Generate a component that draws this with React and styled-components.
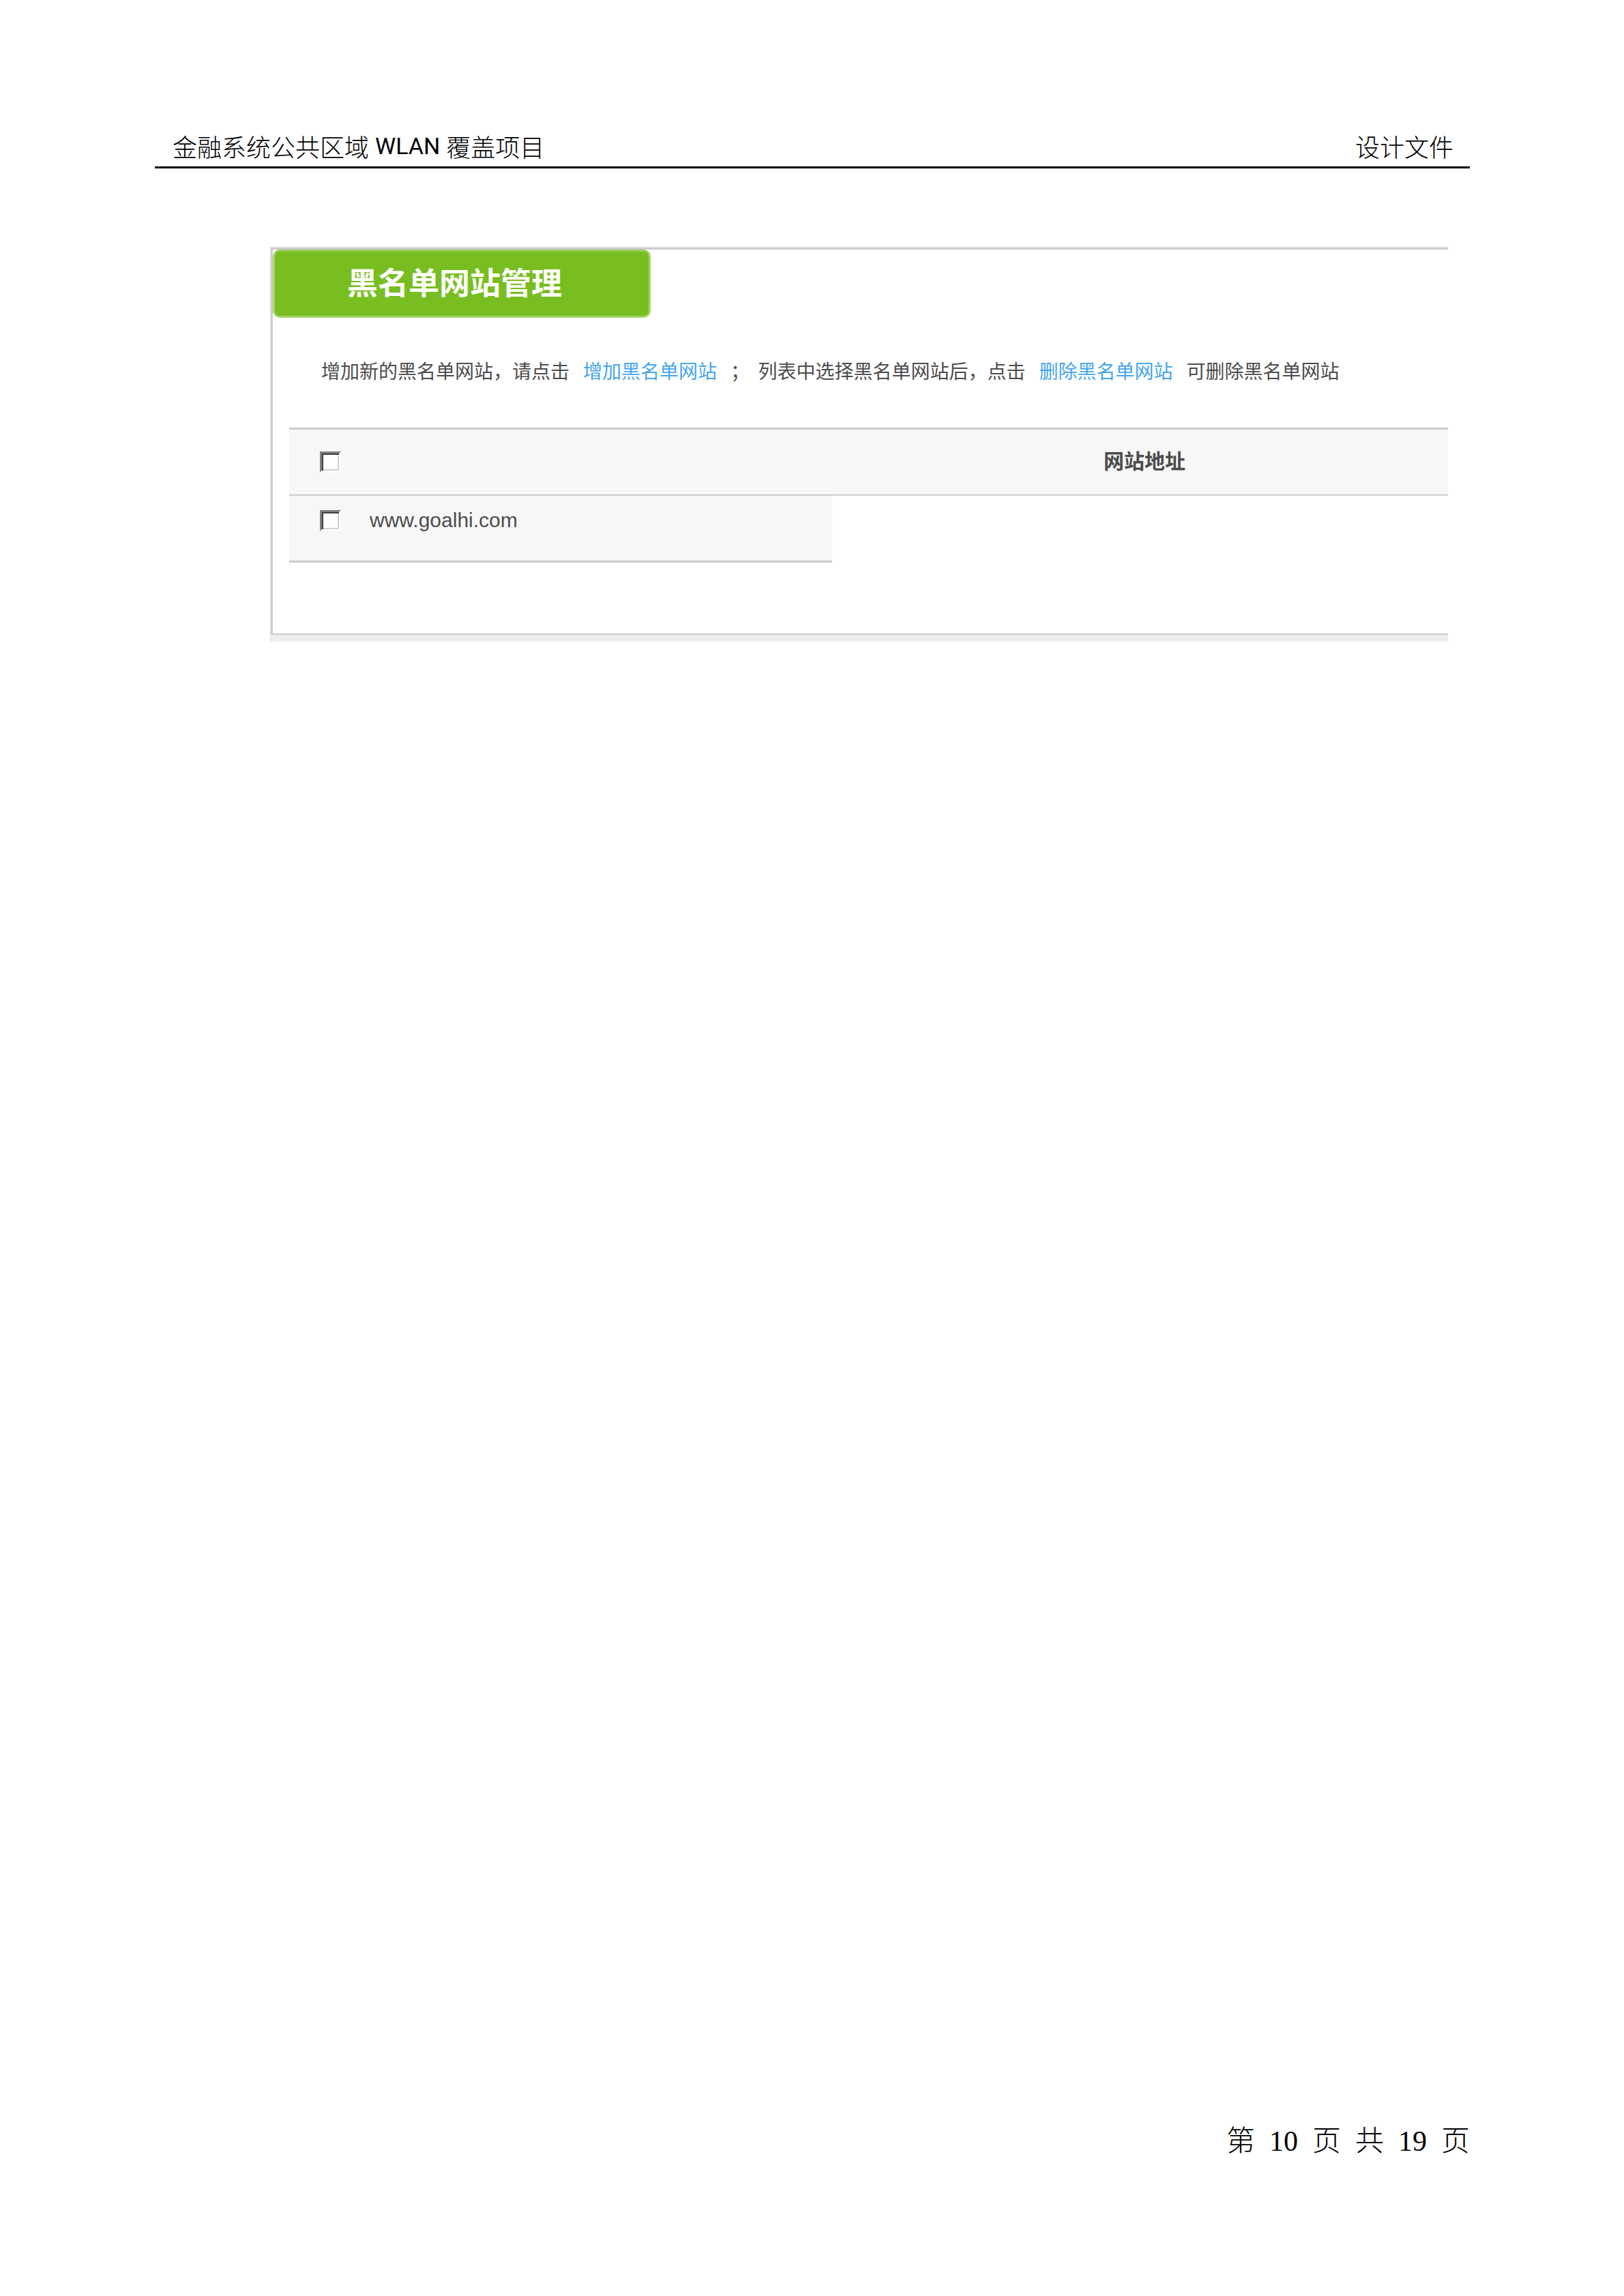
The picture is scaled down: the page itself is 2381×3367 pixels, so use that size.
import React, { useState } from 'react';
import styled, { createGlobalStyle } from 'styled-components';

const COLORS = {
  ink: '#000000',
  text: '#4c4c4c',
  link: '#45a5ef',
  green: '#78be20',
  greenEdge: '#a5d56b',
  line: '#cccccc',
  edge: '#ededed',
  cell: '#f7f7f7',
};

const SANS = `"Liberation Sans", "Noto Sans CJK SC", sans-serif`;
const CJK = `"Noto Sans CJK SC", sans-serif`;

const GlobalStyle = createGlobalStyle`
  * {
    box-sizing: border-box;
  }
  body {
    margin: 0;
    background: #ffffff;
  }
`;

const Page = styled.div`
  display: flex;
  flex-direction: column;
  min-height: 100vh;
  padding: 186px 226px 196px 227px;
  color: ${COLORS.ink};
`;

const PageHeader = styled.header`
  display: flex;
  justify-content: space-between;
  padding: 0 24px 2px 26px;
  border-bottom: 3px solid ${COLORS.ink};
  font-family: ${CJK};
  font-size: 36px;
  font-weight: 300;
  line-height: 56px;
`;

const ProjectName = styled.span`
  display: flex;
  gap: 9px;
`;

const Latin = styled.span`
  font-family: Roboto, "Liberation Sans", sans-serif;
  font-size: 34px;
  font-weight: 400;
`;

const Panel = styled.section`
  margin: 114px 32px 0 168px;
  border: solid ${COLORS.edge};
  border-width: 2px 0 10px 2px;
  font-family: ${SANS};
  color: ${COLORS.text};
`;

const PanelBody = styled.div`
  border: solid ${COLORS.line};
  border-width: 3px 0 2px 3px;
  padding-bottom: 104px;
`;

const PanelTitle = styled.h1`
  width: 554px;
  margin: 0;
  padding: 0 0 6px 106px;
  border: 3px solid ${COLORS.greenEdge};
  border-top-color: #97cb58;
  border-radius: 10px;
  background: ${COLORS.green};
  color: #ffffff;
  font-family: ${CJK};
  font-size: 45px;
  font-weight: 700;
  line-height: 88px;
`;

const Hint = styled.p`
  margin: 0;
  padding: 56px 0 63px 71px;
  font-family: ${CJK};
  font-size: 28px;
  line-height: 42px;
`;

const HintLink = styled.a`
  margin: 0 20px;
  color: ${COLORS.link};
  text-decoration: none;
`;

const TableWrap = styled.div`
  padding-left: 24px;
`;

const SiteTable = styled.table`
  width: 100%;
  table-layout: fixed;
  border-spacing: 0;
  font-size: 30px;
  line-height: 34px;
`;

const SelectHead = styled.th`
  width: 796px;
  height: 100px;
  padding: 0 0 0 45px;
  border: solid ${COLORS.line};
  border-width: 3px 0 2px;
  background: ${COLORS.cell};
  text-align: left;
`;

const AddressHead = styled(SelectHead)`
  width: auto;
  padding: 0 0 8px 13px;
  font-family: ${CJK};
  text-align: center;
`;

const SiteCell = styled.td`
  height: 98px;
  padding: 19px 0 0 45px;
  border-bottom: 3px solid ${COLORS.line};
  background: ${COLORS.cell};
  vertical-align: top;
`;

const SiteLabel = styled.label`
  display: flex;
  align-items: center;
  gap: 42px;
`;

const Checkbox = styled.input`
  appearance: none;
  display: block;
  flex: none;
  width: 31px;
  height: 31px;
  margin: 0;
  border: solid;
  border-width: 3px;
  border-color: #808080 #ffffff #ffffff #808080;
  background: #ffffff;
  box-shadow: inset 2px 2px #404040, inset -2px -2px #d4d0c8;
  &:checked {
    background: #404040;
  }
`;

const PageFooter = styled.footer`
  display: flex;
  justify-content: flex-end;
  gap: 21px;
  margin-top: auto;
  font-family: "Liberation Serif", "Noto Sans CJK SC", serif;
  font-size: 42px;
  font-weight: 300;
  line-height: 62px;
`;

const SITES = ['www.goalhi.com'];

function App() {
  const [selected, setSelected] = useState([]);

  const toggleAll = (e) => setSelected(e.target.checked ? SITES : []);
  const toggle = (site) =>
    setSelected(
      selected.includes(site) ? selected.filter((s) => s !== site) : [...selected, site]
    );

  return (
    <>
      <GlobalStyle />
      <Page lang="zh-CN">
        <PageHeader>
          <ProjectName>
            <span>金融系统公共区域</span>
            <Latin>WLAN</Latin>
            <span>覆盖项目</span>
          </ProjectName>
          <span>设计文件</span>
        </PageHeader>
        <Panel>
          <PanelBody>
            <PanelTitle>黑名单网站管理</PanelTitle>
            <Hint>
              增加新的黑名单网站，请点击
              <HintLink href="#add">增加黑名单网站</HintLink>
              ；&nbsp;&nbsp;列表中选择黑名单网站后，点击
              <HintLink href="#delete">删除黑名单网站</HintLink>
              可删除黑名单网站
            </Hint>
            <TableWrap>
              <SiteTable>
                <thead>
                  <tr>
                    <SelectHead>
                      <Checkbox
                        type="checkbox"
                        aria-label="全选"
                        checked={selected.length === SITES.length}
                        onChange={toggleAll}
                      />
                    </SelectHead>
                    <AddressHead>网站地址</AddressHead>
                  </tr>
                </thead>
                <tbody>
                  {SITES.map((site) => (
                    <tr key={site}>
                      <SiteCell>
                        <SiteLabel>
                          <Checkbox
                            type="checkbox"
                            checked={selected.includes(site)}
                            onChange={() => toggle(site)}
                          />
                          {site}
                        </SiteLabel>
                      </SiteCell>
                    </tr>
                  ))}
                </tbody>
              </SiteTable>
            </TableWrap>
          </PanelBody>
        </Panel>
        <PageFooter>
          <span>第</span>
          <span>10</span>
          <span>页</span>
          <span>共</span>
          <span>19</span>
          <span>页</span>
        </PageFooter>
      </Page>
    </>
  );
}

export default App;
